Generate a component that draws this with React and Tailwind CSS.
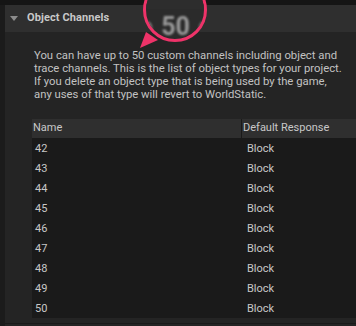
import React from "react";

const rows = ["42", "43", "44", "45", "46", "47", "48", "49", "50"];

export default function App() {
  return (
    <div
      className="relative w-[356px] h-[326px] overflow-hidden bg-[#151515] text-[#c4c4c4]"
      style={{ fontFamily: "Roboto, 'Liberation Sans', sans-serif" }}
    >
      <div className="pt-[5px] flex h-full">
        <div className="w-[5px] bg-[#1b1b1b] shrink-0" />
        <div className="flex-1 flex flex-col bg-[#242424]">
          <div className="h-[27px] bg-[#2f2f2f] flex items-center shrink-0">
            <svg width="8" height="5" viewBox="0 0 8 5" className="ml-[5px]">
              <polygon points="0,0 8,0 4,5" fill="#8c8c8c" />
            </svg>
            <span className="ml-[9px] text-[11px] font-bold text-[#c8c8c8] tracking-[0.1px]">
              Object Channels
            </span>
          </div>
          <div className="pl-[29px] pt-[17px] text-[11.3px] leading-[13px] text-[#c2c2c2] w-[340px]">
            You can have up to 50 custom channels including object and trace channels. This is the list of object types for your project. If you delete an object type that is being used by the game, any uses of that type will revert to WorldStatic.
          </div>
          <div className="ml-[27px] mt-[18px] flex flex-col">
            <div className="h-[19px] bg-[#2f2f2f] flex items-center text-[11px] text-[#c8c8c8]">
              <div className="w-[209px] pl-[1px]">Name</div>
              <div className="w-[1px] h-full bg-[#1a1a1a]" />
              <div className="pl-[1px]">Default Response</div>
            </div>
            {rows.map((r) => (
              <div
                key={r}
                className="h-[20px] pt-[2px] bg-[#1a1a1a] flex items-center text-[11px] text-[#c8c8c8]"
              >
                <div className="w-[210px] pl-[3px]">{r}</div>
                <div className="pl-[5px]">Block</div>
              </div>
            ))}
          </div>
          <div className="mt-[5px] h-[1px] bg-[#1a1a1a]" />
        </div>
      </div>

      {/* magnifier callout */}
      <svg
        className="absolute left-[138px] top-[28px]"
        width="24"
        height="24"
        viewBox="0 0 24 24"
      >
        <polygon points="2,20 8,4 20,12" fill="#ee3369" />
      </svg>
      <div className="absolute left-[143px] top-[-22px] w-[64px] h-[64px] rounded-full border-[3px] border-[#ee3369] bg-[#2b2b2b] overflow-hidden">
        <div className="absolute left-0 right-0 top-0 h-[28px] bg-[#2d2d2d]" />
        <div className="absolute left-0 top-[33px] w-full flex justify-center items-center gap-[8px] text-[25px] leading-none font-bold text-[#9a9a9a] blur-[1px]">
          <span className="text-[#777]">o</span>
          <span>50</span>
          <span className="text-[#777]">c</span>
        </div>
      </div>
    </div>
  );
}
